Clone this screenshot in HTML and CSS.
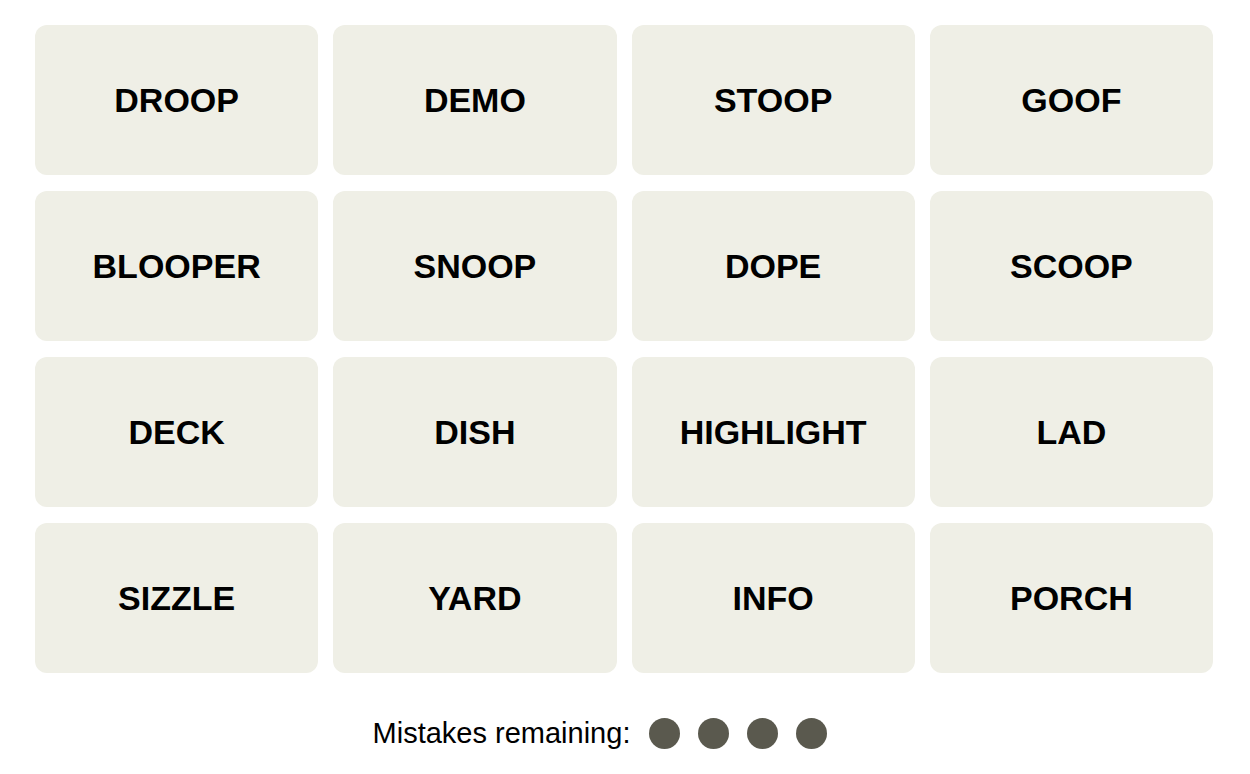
FILE: index.html
```html
<!DOCTYPE html>
<html>

<head>
    <meta charset="UTF-8">
    <title>Connections</title>
    <link rel="stylesheet" href="styles.css">
</head>

<body>
    <div class="board">
        <div class="tile">DROOP</div>
        <div class="tile">DEMO</div>
        <div class="tile">STOOP</div>
        <div class="tile">GOOF</div>
        <div class="tile">BLOOPER</div>
        <div class="tile">SNOOP</div>
        <div class="tile">DOPE</div>
        <div class="tile">SCOOP</div>
        <div class="tile">DECK</div>
        <div class="tile">DISH</div>
        <div class="tile">HIGHLIGHT</div>
        <div class="tile">LAD</div>
        <div class="tile">SIZZLE</div>
        <div class="tile">YARD</div>
        <div class="tile">INFO</div>
        <div class="tile">PORCH</div>
    </div>
    <div class="mistakes">
        <span class="mistakes-label">Mistakes remaining:</span>
        <span class="dots">
            <span class="dot"></span>
            <span class="dot"></span>
            <span class="dot"></span>
            <span class="dot"></span>
        </span>
    </div>
</body>

</html>
```

FILE: styles.css
```css
/* Page */
body {
    margin: 0;
    padding: 25px 37px 0 35px;
    background-color: #fff;
    font-family: "Liberation Sans", Arial, sans-serif;
    color: #000;
}

/* Word grid */
.board {
    display: grid;
    grid-template-columns: repeat(4, 1fr);
    column-gap: 15px;
    row-gap: 16px;
}

.tile {
    height: 150px;
    background-color: #efefe6;
    border-radius: 12px;
    display: flex;
    align-items: center;
    justify-content: center;
    font-size: 34px;
    font-weight: bold;
    padding-top: 1px;
    box-sizing: border-box;
}

/* Mistakes counter */
.mistakes {
    display: flex;
    justify-content: center;
    align-items: center;
    margin-top: 44px;
    padding-right: 48px;
}

.mistakes-label {
    font-size: 29px;
    margin-right: 19px;
}

.dots {
    display: flex;
    gap: 18px;
}

.dot {
    width: 31px;
    height: 31px;
    border-radius: 50%;
    background-color: #5a594e;
}
```
